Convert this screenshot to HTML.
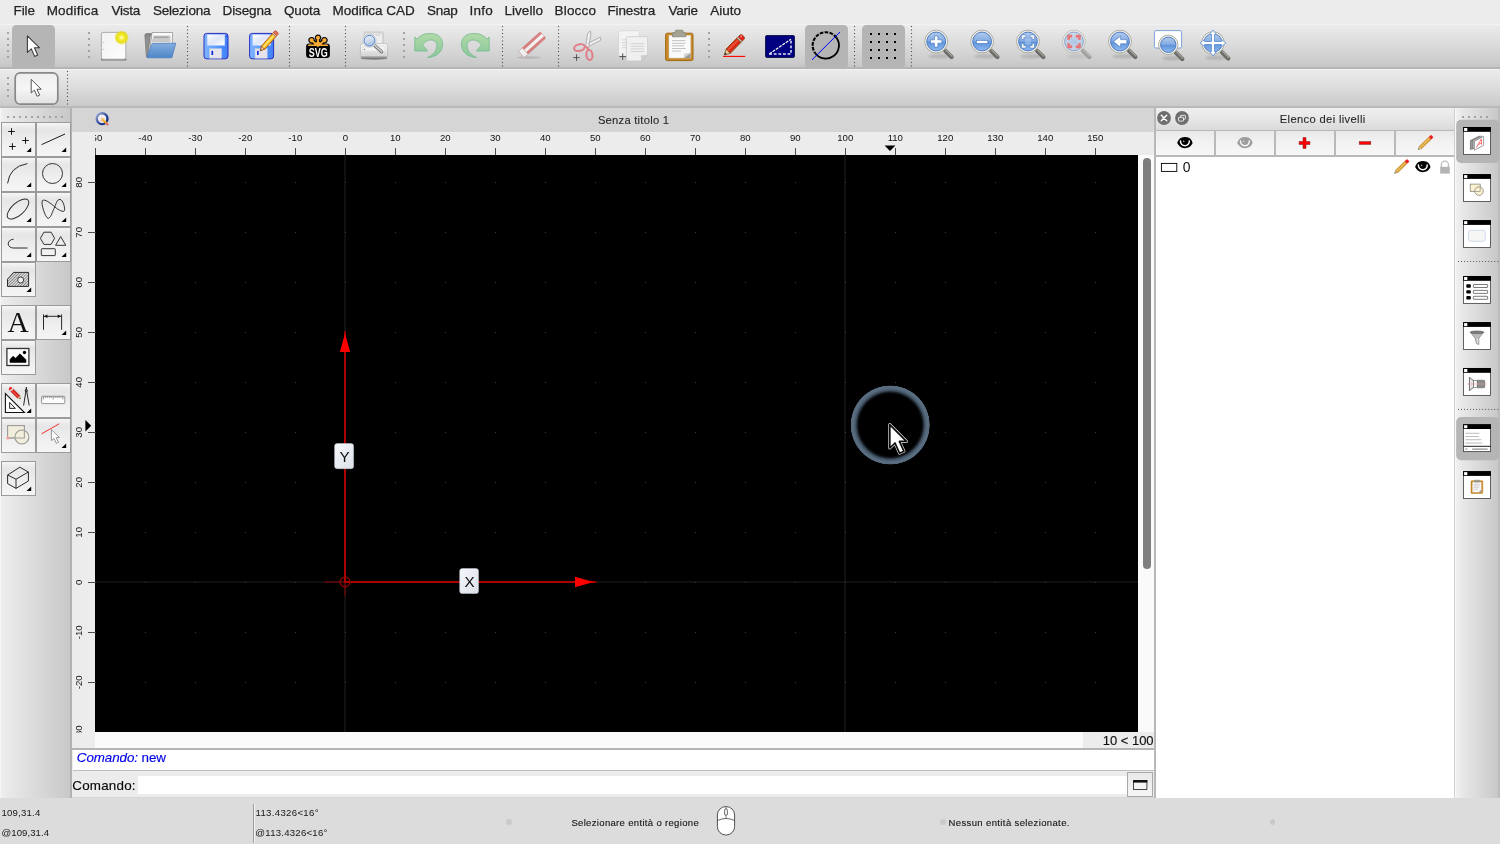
<!DOCTYPE html>
<html lang="it"><head><meta charset="utf-8"><title>QCAD - Senza titolo 1</title>
<style>

html,body{margin:0;padding:0;}
body{width:1500px;height:844px;overflow:hidden;background:#ececec;font-family:"Liberation Sans",sans-serif;color:#111;}
#app{will-change:transform;position:relative;width:1500px;height:844px;overflow:hidden;background:#ececec;}
.abs,#app div,#app span,#app svg{position:absolute;}
#app svg{overflow:visible;}
.menubar{left:0;top:0;width:1500px;height:24px;background:#ececec;}
.menubar span{top:0;height:22px;line-height:21px;font-size:14px;color:#1c1c1c;white-space:nowrap;transform-origin:0 50%;}
.tb1{left:0;top:24px;width:1500px;height:45px;background:linear-gradient(#f6f6f6 0px,#ebebeb 1.4px,#e4e4e4 10px,#d8d8d8 24px,#cccccc 38px,#c6c6c6 42.6px,#b4b4b4 43.6px,#b4b4b4 44.6px,#c8c8c8 45px);}
.tb2{left:0;top:69px;width:1500px;height:39px;background:linear-gradient(#f6f6f6 0px,#ebebeb 1.4px,#e5e5e5 9px,#dadada 21px,#cfcfcf 32px,#cbcbcb 36.6px,#b8b8b8 37.6px,#b8b8b8 38.6px,#c8c8c8 39px);}
.lefttb{left:0;top:108px;width:72px;height:690px;background:linear-gradient(90deg,#fbfbfb 0px,#eeeeee 1.5px,#e6e6e6 14px,#d9d9d9 38px,#cdcdcd 60px,#c9c9c9 69.5px,#b2b2b2 70.5px,#b2b2b2 72px);}
.tabbar{left:72px;top:108px;width:1082px;height:24px;background:#d5d5d5;}
.hruler{left:72px;top:132px;width:1082px;height:23px;background:#ececec;}
.vruler{left:72px;top:155px;width:23px;height:593px;background:#ececec;}
.canvas{left:95px;top:155px;width:1043px;height:577px;background:#000;overflow:hidden;}
.vscroll{left:1138px;top:155px;width:16px;height:577px;background:#fafafa;}
.hscroll{left:95px;top:732px;width:1059px;height:16px;background:#fafafa;}
.status{left:0;top:798px;width:1500px;height:46px;background:#dcdcdc;}
.rpanel{left:1156px;top:108px;width:298px;height:690px;background:#fff;}
.righttb{left:1454px;top:108px;width:46px;height:690px;background:linear-gradient(90deg,#d0d0d0 0px,#d0d0d0 1px,#f8f8f8 1.4px,#f0f0f0 2.6px,#e8e8e8 8px,#dadada 24px,#cccccc 40px,#c8c8c8 43.8px,#bcbcbc 44.4px,#bcbcbc 46px);}

.rl{top:-2px;width:60px;text-align:center;font-size:9.6px;line-height:16px;height:16px;color:#1a1a1a;letter-spacing:-0.1px;}
.vrl{left:-24px;width:60px;height:60px;}

.lbtn{height:35.8px;box-sizing:border-box;border:1.2px solid #9b9b9b;background:linear-gradient(#f6f6f6 0%,#ebebeb 12%,#e6e6e6 22%,#efefef 60%,#f5f5f5 100%);}
.lsep{width:1.5px;height:34px;background:#9b9b9b;}

</style></head>
<body>
<div id="app">
<div class="menubar"></div>
<div class="tb1"></div>
<div class="tb2"></div>
<div class="lefttb"></div>
<div class="tabbar"></div>
<div class="hruler"></div>
<div class="vruler"></div>
<div class="canvas"></div>
<div class="vscroll"></div>
<div class="hscroll"></div>
<div class="rpanel"></div>
<div class="righttb"></div>
<div class="status"></div>
<span id="t_menu0" style="left:13.50px;top:1.00px;font-size:13.5px;line-height:20px;height:20px;letter-spacing:-0.111px;color:#242424;font-style:normal;font-weight:normal;font-family:'Liberation Sans',sans-serif;white-space:pre;-webkit-text-stroke:0.25px #242424;">File</span><span id="t_menu1" style="left:46.70px;top:1.00px;font-size:13.5px;line-height:20px;height:20px;letter-spacing:0.186px;color:#242424;font-style:normal;font-weight:normal;font-family:'Liberation Sans',sans-serif;white-space:pre;-webkit-text-stroke:0.25px #242424;">Modifica</span><span id="t_menu2" style="left:111.47px;top:1.00px;font-size:13.5px;line-height:20px;height:20px;letter-spacing:-0.250px;color:#242424;font-style:normal;font-weight:normal;font-family:'Liberation Sans',sans-serif;white-space:pre;-webkit-text-stroke:0.25px #242424;">Vista</span><span id="t_menu3" style="left:153.00px;top:1.00px;font-size:13.5px;line-height:20px;height:20px;letter-spacing:-0.229px;color:#242424;font-style:normal;font-weight:normal;font-family:'Liberation Sans',sans-serif;white-space:pre;-webkit-text-stroke:0.25px #242424;">Seleziona</span><span id="t_menu4" style="left:222.50px;top:1.00px;font-size:13.5px;line-height:20px;height:20px;letter-spacing:-0.111px;color:#242424;font-style:normal;font-weight:normal;font-family:'Liberation Sans',sans-serif;white-space:pre;-webkit-text-stroke:0.25px #242424;">Disegna</span><span id="t_menu5" style="left:284.00px;top:1.00px;font-size:13.5px;line-height:20px;height:20px;letter-spacing:-0.150px;color:#242424;font-style:normal;font-weight:normal;font-family:'Liberation Sans',sans-serif;white-space:pre;-webkit-text-stroke:0.25px #242424;">Quota</span><span id="t_menu6" style="left:332.50px;top:1.00px;font-size:13.5px;line-height:20px;height:20px;letter-spacing:-0.024px;color:#242424;font-style:normal;font-weight:normal;font-family:'Liberation Sans',sans-serif;white-space:pre;-webkit-text-stroke:0.25px #242424;">Modifica CAD</span><span id="t_menu7" style="left:427.00px;top:1.00px;font-size:13.5px;line-height:20px;height:20px;letter-spacing:-0.256px;color:#242424;font-style:normal;font-weight:normal;font-family:'Liberation Sans',sans-serif;white-space:pre;-webkit-text-stroke:0.25px #242424;">Snap</span><span id="t_menu8" style="left:469.53px;top:1.00px;font-size:13.5px;line-height:20px;height:20px;letter-spacing:0.211px;color:#242424;font-style:normal;font-weight:normal;font-family:'Liberation Sans',sans-serif;white-space:pre;-webkit-text-stroke:0.25px #242424;">Info</span><span id="t_menu9" style="left:504.50px;top:1.00px;font-size:13.5px;line-height:20px;height:20px;letter-spacing:0.028px;color:#242424;font-style:normal;font-weight:normal;font-family:'Liberation Sans',sans-serif;white-space:pre;-webkit-text-stroke:0.25px #242424;">Livello</span><span id="t_menu10" style="left:554.50px;top:1.00px;font-size:13.5px;line-height:20px;height:20px;letter-spacing:0.200px;color:#242424;font-style:normal;font-weight:normal;font-family:'Liberation Sans',sans-serif;white-space:pre;-webkit-text-stroke:0.25px #242424;">Blocco</span><span id="t_menu11" style="left:607.50px;top:1.00px;font-size:13.5px;line-height:20px;height:20px;letter-spacing:-0.157px;color:#242424;font-style:normal;font-weight:normal;font-family:'Liberation Sans',sans-serif;white-space:pre;-webkit-text-stroke:0.25px #242424;">Finestra</span><span id="t_menu12" style="left:668.47px;top:1.00px;font-size:13.5px;line-height:20px;height:20px;letter-spacing:-0.225px;color:#242424;font-style:normal;font-weight:normal;font-family:'Liberation Sans',sans-serif;white-space:pre;-webkit-text-stroke:0.25px #242424;">Varie</span><span id="t_menu13" style="left:710.17px;top:1.00px;font-size:13.5px;line-height:20px;height:20px;letter-spacing:0.000px;color:#242424;font-style:normal;font-weight:normal;font-family:'Liberation Sans',sans-serif;white-space:pre;-webkit-text-stroke:0.25px #242424;">Aiuto</span>
<svg style="left:0;top:0" width="1500" height="110" viewBox="0 0 1500 110"><defs>
<linearGradient id="gLens" x1="0" y1="0" x2="0" y2="1"><stop offset="0" stop-color="#b4cbec"/><stop offset="0.46" stop-color="#84ace2"/><stop offset="0.54" stop-color="#6094da"/><stop offset="1" stop-color="#8fbaf0"/></linearGradient>
<linearGradient id="gLensR" x1="0" y1="0" x2="0" y2="1"><stop offset="0" stop-color="#c3d3ea"/><stop offset="0.5" stop-color="#a9c3e8"/><stop offset="1" stop-color="#b9d2f2"/></linearGradient>
<linearGradient id="gPaper" x1="0" y1="0" x2="1" y2="1"><stop offset="0" stop-color="#f2f2f2"/><stop offset="1" stop-color="#fdfdfd"/></linearGradient>
<linearGradient id="gFolder" x1="0" y1="0" x2="0" y2="1"><stop offset="0" stop-color="#86aede"/><stop offset="1" stop-color="#4e86c8"/></linearGradient>
<linearGradient id="gFloppy" x1="0" y1="0" x2="1" y2="0"><stop offset="0" stop-color="#7fb4ff"/><stop offset="0.5" stop-color="#5b9cff"/><stop offset="1" stop-color="#3f7ff5"/></linearGradient>
<linearGradient id="gLabel" x1="0" y1="0" x2="1" y2="1"><stop offset="0" stop-color="#ffffff"/><stop offset="0.5" stop-color="#dfe6fb"/><stop offset="1" stop-color="#ffffff"/></linearGradient>
<linearGradient id="gGreen" x1="0" y1="0" x2="0" y2="1"><stop offset="0" stop-color="#b2d9a8"/><stop offset="1" stop-color="#86c79a"/></linearGradient>
<linearGradient id="gBtn" x1="0" y1="0" x2="0" y2="1"><stop offset="0" stop-color="#ededed"/><stop offset="0.5" stop-color="#f6f6f6"/><stop offset="1" stop-color="#e2e2e2"/></linearGradient>
<radialGradient id="gGlow"><stop offset="0" stop-color="#ffffe8"/><stop offset="0.2" stop-color="#fbf56a"/><stop offset="0.45" stop-color="#f0e820"/><stop offset="0.72" stop-color="#e6dd18" stop-opacity="0.95"/><stop offset="1" stop-color="#e6dd18" stop-opacity="0"/></radialGradient>
<filter id="fBlur1" x="-50%" y="-50%" width="200%" height="200%"><feGaussianBlur stdDeviation="1.2"/></filter>
<filter id="fBlur05" x="-50%" y="-50%" width="200%" height="200%"><feGaussianBlur stdDeviation="0.5"/></filter>
</defs><rect x="12" y="25" width="43" height="43.5" rx="4.5" fill="#b5b5b5"/><rect x="805" y="25" width="43" height="43.5" rx="4.5" fill="#b5b5b5"/><rect x="862" y="25" width="43" height="43.5" rx="4.5" fill="#b5b5b5"/><rect x="7" y="32" width="2" height="2" fill="#a3a3a3"/><rect x="7" y="38" width="2" height="2" fill="#a3a3a3"/><rect x="7" y="44" width="2" height="2" fill="#a3a3a3"/><rect x="7" y="50" width="2" height="2" fill="#a3a3a3"/><rect x="7" y="56" width="2" height="2" fill="#a3a3a3"/><rect x="88" y="32" width="2" height="2" fill="#a3a3a3"/><rect x="88" y="38" width="2" height="2" fill="#a3a3a3"/><rect x="88" y="44" width="2" height="2" fill="#a3a3a3"/><rect x="88" y="50" width="2" height="2" fill="#a3a3a3"/><rect x="88" y="56" width="2" height="2" fill="#a3a3a3"/><rect x="403" y="32" width="2" height="2" fill="#a3a3a3"/><rect x="403" y="38" width="2" height="2" fill="#a3a3a3"/><rect x="403" y="44" width="2" height="2" fill="#a3a3a3"/><rect x="403" y="50" width="2" height="2" fill="#a3a3a3"/><rect x="403" y="56" width="2" height="2" fill="#a3a3a3"/><rect x="708" y="32" width="2" height="2" fill="#a3a3a3"/><rect x="708" y="38" width="2" height="2" fill="#a3a3a3"/><rect x="708" y="44" width="2" height="2" fill="#a3a3a3"/><rect x="708" y="50" width="2" height="2" fill="#a3a3a3"/><rect x="708" y="56" width="2" height="2" fill="#a3a3a3"/><rect x="186.95" y="25.95" width="1.1" height="1.1" fill="#505050"/><rect x="186.95" y="29.45" width="1.1" height="1.1" fill="#505050"/><rect x="186.95" y="32.95" width="1.1" height="1.1" fill="#505050"/><rect x="186.95" y="36.45" width="1.1" height="1.1" fill="#505050"/><rect x="186.95" y="40.45" width="1.1" height="1.1" fill="#505050"/><rect x="186.95" y="43.95" width="1.1" height="1.1" fill="#505050"/><rect x="186.95" y="47.45" width="1.1" height="1.1" fill="#505050"/><rect x="186.95" y="50.95" width="1.1" height="1.1" fill="#505050"/><rect x="186.95" y="54.95" width="1.1" height="1.1" fill="#505050"/><rect x="186.95" y="58.45" width="1.1" height="1.1" fill="#505050"/><rect x="186.95" y="61.95" width="1.1" height="1.1" fill="#505050"/><rect x="186.95" y="65.45" width="1.1" height="1.1" fill="#505050"/><rect x="288.95" y="25.95" width="1.1" height="1.1" fill="#505050"/><rect x="288.95" y="29.45" width="1.1" height="1.1" fill="#505050"/><rect x="288.95" y="32.95" width="1.1" height="1.1" fill="#505050"/><rect x="288.95" y="36.45" width="1.1" height="1.1" fill="#505050"/><rect x="288.95" y="40.45" width="1.1" height="1.1" fill="#505050"/><rect x="288.95" y="43.95" width="1.1" height="1.1" fill="#505050"/><rect x="288.95" y="47.45" width="1.1" height="1.1" fill="#505050"/><rect x="288.95" y="50.95" width="1.1" height="1.1" fill="#505050"/><rect x="288.95" y="54.95" width="1.1" height="1.1" fill="#505050"/><rect x="288.95" y="58.45" width="1.1" height="1.1" fill="#505050"/><rect x="288.95" y="61.95" width="1.1" height="1.1" fill="#505050"/><rect x="288.95" y="65.45" width="1.1" height="1.1" fill="#505050"/><rect x="344.95" y="25.95" width="1.1" height="1.1" fill="#505050"/><rect x="344.95" y="29.45" width="1.1" height="1.1" fill="#505050"/><rect x="344.95" y="32.95" width="1.1" height="1.1" fill="#505050"/><rect x="344.95" y="36.45" width="1.1" height="1.1" fill="#505050"/><rect x="344.95" y="40.45" width="1.1" height="1.1" fill="#505050"/><rect x="344.95" y="43.95" width="1.1" height="1.1" fill="#505050"/><rect x="344.95" y="47.45" width="1.1" height="1.1" fill="#505050"/><rect x="344.95" y="50.95" width="1.1" height="1.1" fill="#505050"/><rect x="344.95" y="54.95" width="1.1" height="1.1" fill="#505050"/><rect x="344.95" y="58.45" width="1.1" height="1.1" fill="#505050"/><rect x="344.95" y="61.95" width="1.1" height="1.1" fill="#505050"/><rect x="344.95" y="65.45" width="1.1" height="1.1" fill="#505050"/><rect x="501.95" y="25.95" width="1.1" height="1.1" fill="#505050"/><rect x="501.95" y="29.45" width="1.1" height="1.1" fill="#505050"/><rect x="501.95" y="32.95" width="1.1" height="1.1" fill="#505050"/><rect x="501.95" y="36.45" width="1.1" height="1.1" fill="#505050"/><rect x="501.95" y="40.45" width="1.1" height="1.1" fill="#505050"/><rect x="501.95" y="43.95" width="1.1" height="1.1" fill="#505050"/><rect x="501.95" y="47.45" width="1.1" height="1.1" fill="#505050"/><rect x="501.95" y="50.95" width="1.1" height="1.1" fill="#505050"/><rect x="501.95" y="54.95" width="1.1" height="1.1" fill="#505050"/><rect x="501.95" y="58.45" width="1.1" height="1.1" fill="#505050"/><rect x="501.95" y="61.95" width="1.1" height="1.1" fill="#505050"/><rect x="501.95" y="65.45" width="1.1" height="1.1" fill="#505050"/><rect x="557.95" y="25.95" width="1.1" height="1.1" fill="#505050"/><rect x="557.95" y="29.45" width="1.1" height="1.1" fill="#505050"/><rect x="557.95" y="32.95" width="1.1" height="1.1" fill="#505050"/><rect x="557.95" y="36.45" width="1.1" height="1.1" fill="#505050"/><rect x="557.95" y="40.45" width="1.1" height="1.1" fill="#505050"/><rect x="557.95" y="43.95" width="1.1" height="1.1" fill="#505050"/><rect x="557.95" y="47.45" width="1.1" height="1.1" fill="#505050"/><rect x="557.95" y="50.95" width="1.1" height="1.1" fill="#505050"/><rect x="557.95" y="54.95" width="1.1" height="1.1" fill="#505050"/><rect x="557.95" y="58.45" width="1.1" height="1.1" fill="#505050"/><rect x="557.95" y="61.95" width="1.1" height="1.1" fill="#505050"/><rect x="557.95" y="65.45" width="1.1" height="1.1" fill="#505050"/><rect x="853.95" y="25.95" width="1.1" height="1.1" fill="#505050"/><rect x="853.95" y="29.45" width="1.1" height="1.1" fill="#505050"/><rect x="853.95" y="32.95" width="1.1" height="1.1" fill="#505050"/><rect x="853.95" y="36.45" width="1.1" height="1.1" fill="#505050"/><rect x="853.95" y="40.45" width="1.1" height="1.1" fill="#505050"/><rect x="853.95" y="43.95" width="1.1" height="1.1" fill="#505050"/><rect x="853.95" y="47.45" width="1.1" height="1.1" fill="#505050"/><rect x="853.95" y="50.95" width="1.1" height="1.1" fill="#505050"/><rect x="853.95" y="54.95" width="1.1" height="1.1" fill="#505050"/><rect x="853.95" y="58.45" width="1.1" height="1.1" fill="#505050"/><rect x="853.95" y="61.95" width="1.1" height="1.1" fill="#505050"/><rect x="853.95" y="65.45" width="1.1" height="1.1" fill="#505050"/><rect x="910.95" y="25.95" width="1.1" height="1.1" fill="#505050"/><rect x="910.95" y="29.45" width="1.1" height="1.1" fill="#505050"/><rect x="910.95" y="32.95" width="1.1" height="1.1" fill="#505050"/><rect x="910.95" y="36.45" width="1.1" height="1.1" fill="#505050"/><rect x="910.95" y="40.45" width="1.1" height="1.1" fill="#505050"/><rect x="910.95" y="43.95" width="1.1" height="1.1" fill="#505050"/><rect x="910.95" y="47.45" width="1.1" height="1.1" fill="#505050"/><rect x="910.95" y="50.95" width="1.1" height="1.1" fill="#505050"/><rect x="910.95" y="54.95" width="1.1" height="1.1" fill="#505050"/><rect x="910.95" y="58.45" width="1.1" height="1.1" fill="#505050"/><rect x="910.95" y="61.95" width="1.1" height="1.1" fill="#505050"/><rect x="910.95" y="65.45" width="1.1" height="1.1" fill="#505050"/><path d="M27.40 35.80 L27.40 52.40 L31.30 48.90 L34.60 56.40 L37.70 55.00 L34.40 47.80 L39.60 47.80 Z" fill="#fff" stroke="#3c3c3c" stroke-width="1.1" stroke-linejoin="round"/><rect x="101" y="58.2" width="25.4" height="2.4" rx="1.2" fill="#000" opacity="0.42" filter="url(#fBlur05)"/><rect x="101.4" y="32.4" width="24.4" height="26.8" rx="1.6" fill="url(#gPaper)" stroke="#a6a6a6" stroke-width="0.9"/><rect x="102.8" y="42" width="1.2" height="0.8" fill="#bbb"/><rect x="102.8" y="49" width="1.2" height="0.8" fill="#bbb"/><circle cx="121.6" cy="37.6" r="7.4" fill="url(#gGlow)"/><path d="M144.6 35.5 L152 35.5 L152 33 L146 33 Z" fill="#8c8c8c"/><path d="M144.8 34.8 L150.5 34.8 L147.5 57.4 L146.4 57 Z" fill="#8f8f8f" stroke="#6e6e6e" stroke-width="0.6"/><path d="M152 32.5 L172.6 32.5 L172.2 45 L149.4 54 Z" fill="#fafafa" stroke="#8a8a8a" stroke-width="0.7"/><path d="M153.5 35.5 L170.5 35.5 L170.5 42.5 L151.5 42.5 Z" fill="#c9c9c9"/><rect x="154" y="36.6" width="14.5" height="1.2" fill="#9c9c9c"/><path d="M152.2 43.5 L175.8 43.2 L172 57.2 Q171.8 57.8 171 57.8 L147.6 57.8 Q146.8 57.6 147 56.8 Z" fill="url(#gFolder)" stroke="#4a7dbd" stroke-width="0.8" stroke-linejoin="round"/><rect x="204" y="33.4" width="24" height="25.4" rx="2.6" fill="url(#gFloppy)" stroke="#2a2fc0" stroke-width="1"/><rect x="207.2" y="34.7" width="17.6" height="10.6" fill="url(#gLabel)" stroke="#c8d6ff" stroke-width="0.5"/><rect x="209.4" y="48.6" width="12.2" height="9.6" fill="#e4e4ea" stroke="#b8c8ee" stroke-width="0.5"/><rect x="211.4" y="50.8" width="1.8" height="4.2" rx="0.6" fill="#1730d8"/><rect x="225.6" y="35.8" width="1" height="1.2" fill="#2a44d0"/><rect x="249.6" y="33.4" width="24" height="25.4" rx="2.6" fill="url(#gFloppy)" stroke="#2a2fc0" stroke-width="1"/><rect x="252.8" y="34.7" width="17.6" height="10.6" fill="url(#gLabel)" stroke="#c8d6ff" stroke-width="0.5"/><rect x="255" y="48.6" width="12.2" height="9.6" fill="#e4e4ea" stroke="#b8c8ee" stroke-width="0.5"/><rect x="257" y="50.8" width="1.8" height="4.2" rx="0.6" fill="#1730d8"/><rect x="271.2" y="35.8" width="1" height="1.2" fill="#2a44d0"/><g transform="translate(260.3 50.8) rotate(-48.5)"><path d="M0 0 L4.2 -2.3 L4.2 2.3 Z" fill="#f0cfa0" stroke="#a04010" stroke-width="0.7"/><path d="M0 0 L1.6 -0.9 L1.6 0.9 Z" fill="#40302a"/><rect x="4.2" y="-2.3" width="16.6" height="4.6" fill="#f5c21a" stroke="#b04a10" stroke-width="0.8"/><rect x="4.2" y="-0.8" width="16.6" height="1.5" fill="#ffe27a"/><rect x="20.8" y="-2.3" width="1.6" height="4.6" fill="#d8d8d8" stroke="#b04a10" stroke-width="0.6"/><path d="M22.4 -2.3 h1.6 q1.2 0 1.2 1.2 v2.2 q0 1.2 -1.2 1.2 h-1.6 Z" fill="#e9735a" stroke="#b03a20" stroke-width="0.7"/></g><g fill="#000" stroke="#000" stroke-width="2.8" stroke-linejoin="round"><g transform="translate(318 46) rotate(-48)"><path d="M-0.9 0 L-0.9 -7 A1.9 1.9 0 1 1 0.9 -7 L0.9 0 Z"/></g><g transform="translate(318 46) rotate(0)"><path d="M-0.9 0 L-0.9 -6.6 A1.9 1.9 0 1 1 0.9 -6.6 L0.9 0 Z"/></g><g transform="translate(318 46) rotate(48)"><path d="M-0.9 0 L-0.9 -7 A1.9 1.9 0 1 1 0.9 -7 L0.9 0 Z"/></g></g><rect x="306.1" y="43.4" width="23.8" height="14.5" rx="3.2" fill="#000"/><g fill="#f9ab35" stroke="#f9ab35" stroke-width="0.3" stroke-linejoin="round"><g transform="translate(318 46) rotate(-48)"><path d="M-0.9 0 L-0.9 -7 A1.9 1.9 0 1 1 0.9 -7 L0.9 0 Z"/></g><g transform="translate(318 46) rotate(0)"><path d="M-0.9 0 L-0.9 -6.6 A1.9 1.9 0 1 1 0.9 -6.6 L0.9 0 Z"/></g><g transform="translate(318 46) rotate(48)"><path d="M-0.9 0 L-0.9 -7 A1.9 1.9 0 1 1 0.9 -7 L0.9 0 Z"/></g></g><path d="M307.6 45.6 Q308.6 44 311 44.4 L325 44.4 Q327.4 44 328.4 45.6 Q327.6 46.2 325 46.1 L311 46.1 Q308.4 46.2 307.6 45.6 Z" fill="#f9ab35"/><path d="M313.6 44.6 L318 41 L322.4 44.6 Z" fill="#f9ab35"/><text x="308.7" y="57" font-family="Liberation Sans, sans-serif" font-weight="bold" font-size="13.6" fill="#fff" textLength="18.9" lengthAdjust="spacingAndGlyphs">SVG</text><defs><linearGradient id="gPrn" x1="0" y1="0" x2="0" y2="1"><stop offset="0" stop-color="#fbfbfb"/><stop offset="0.55" stop-color="#ececec"/><stop offset="0.6" stop-color="#dedede"/><stop offset="1" stop-color="#d2d2d2"/></linearGradient><linearGradient id="gLensL" x1="0" y1="0" x2="0.3" y2="1"><stop offset="0" stop-color="#e4edf8"/><stop offset="0.55" stop-color="#cfdcee"/><stop offset="1" stop-color="#a9c0e0"/></linearGradient></defs><ellipse cx="374" cy="58.2" rx="13.4" ry="1.5" fill="#000" opacity="0.4" filter="url(#fBlur05)"/><rect x="364.2" y="32" width="19" height="13.4" rx="1" fill="#dcdcdc" stroke="#bdbdbd" stroke-width="0.7"/><rect x="374.6" y="34" width="7.4" height="9.4" fill="#ededed"/><rect x="376" y="34.6" width="4.4" height="1" fill="#cfcfcf"/><path d="M363 43.6 L385 43.6 Q387.6 43.6 387.6 46.4 L387.6 55.6 Q387.6 57.4 385.8 57.4 L362.2 57.4 Q360.4 57.4 360.4 55.6 L360.4 46.4 Q360.4 43.6 363 43.6 Z" fill="url(#gPrn)" stroke="#b2b2b2" stroke-width="0.7"/><path d="M362.8 46 L385.2 46 L385.2 49.6 Q385.2 51.2 383.6 51.2 L364.4 51.2 Q362.8 51.2 362.8 49.6 Z" fill="#f4f4f4" stroke="#cfcfcf" stroke-width="0.5"/><circle cx="364.6" cy="49.4" r="0.6" fill="#777"/><rect x="361" y="56.6" width="26" height="1.2" rx="0.6" fill="#8e8e8e"/><line x1="374.6" y1="45.6" x2="381.6" y2="51.8" stroke="#777" stroke-width="3.4" stroke-linecap="round"/><line x1="374.8" y1="45.4" x2="381.8" y2="51.6" stroke="#cfcfcf" stroke-width="1.5" stroke-linecap="round"/><circle cx="369.5" cy="40.7" r="6.7" fill="#efefec" stroke="#c4c4bc" stroke-width="0.6"/><circle cx="369.5" cy="40.7" r="5.4" fill="url(#gLensL)" stroke="#4f84d2" stroke-width="1"/><g transform="translate(414.4 33.6)"><path d="M0.4 12.6 L0.4 3.4 L2.6 5.6 C6.6 0.2 14.4 -1.4 21.6 0.8 C27.2 3 29.4 9.4 27.6 14.6 C26 19.6 20.6 23.8 12.8 24 C17.4 22.2 21 19 22.2 14.6 C23.4 9.6 20.6 6.4 16.6 6.4 C13.4 6.4 10.6 8 8.2 11.2 L13 17.4 L0.4 17.4 Z" fill="url(#gGreen)" stroke="#7cbd94" stroke-width="0.9" stroke-linejoin="round"/></g><g transform="translate(489.6 33.6) scale(-1 1)"><path d="M0.4 12.6 L0.4 3.4 L2.6 5.6 C6.6 0.2 14.4 -1.4 21.6 0.8 C27.2 3 29.4 9.4 27.6 14.6 C26 19.6 20.6 23.8 12.8 24 C17.4 22.2 21 19 22.2 14.6 C23.4 9.6 20.6 6.4 16.6 6.4 C13.4 6.4 10.6 8 8.2 11.2 L13 17.4 L0.4 17.4 Z" fill="url(#gGreen)" stroke="#7cbd94" stroke-width="0.9" stroke-linejoin="round"/></g><g opacity="0.62"><ellipse cx="529" cy="57.6" rx="12" ry="1.4" fill="#000" opacity="0.18" filter="url(#fBlur05)"/><g transform="translate(521.4 54.4) rotate(-42)"><rect x="0" y="-4.2" width="29" height="8.4" rx="1" fill="#d84a4a" stroke="#c03838" stroke-width="0.6"/><rect x="0" y="-1.6" width="29" height="3.2" fill="#fff"/><rect x="0" y="-4.2" width="5" height="8.4" fill="#fff" stroke="#b8a0a0" stroke-width="0.6"/></g></g><g opacity="0.85"><path d="M587.6 33.4 L590.4 31 L590.8 34 L588.6 48.4 L585.8 45.6 Z" fill="#f4f4f4" stroke="#8a8a8a" stroke-width="0.7" stroke-linejoin="round"/><path d="M600.4 37.2 L600.8 40.2 L590.2 45.6 L588.4 43.2 Z" fill="#f4f4f4" stroke="#8a8a8a" stroke-width="0.7" stroke-linejoin="round"/><g fill="none" stroke="#e2727e" stroke-width="2.1"><ellipse cx="579.4" cy="47.6" rx="5.4" ry="3.3" transform="rotate(-14 579.4 47.6)"/><ellipse cx="589.4" cy="55" rx="3" ry="5" transform="rotate(-8 589.4 55)"/><path d="M584.2 46.4 Q587 46.6 588.6 50.2" /></g><path d="M573.2 57.6 h6.6 M576.5 54.3 v6.6" stroke="#333" stroke-width="0.9" fill="none"/></g><g opacity="0.9"><rect x="618.6" y="30.8" width="20.6" height="25.4" rx="1.4" fill="#f6f6f6" stroke="#d2d2d2" stroke-width="0.7"/><rect x="622" y="39.4" width="6" height="1" fill="#d6d6d6"/><rect x="622" y="42" width="6" height="1" fill="#d6d6d6"/><rect x="622" y="44.6" width="6" height="1" fill="#d6d6d6"/><rect x="622" y="47.2" width="6" height="1" fill="#d6d6d6"/><path d="M627.6 36.6 L646.4 36.6 Q647.6 36.6 647.6 37.8 L647.6 55.4 L641.8 61 L627.6 61 Q626.4 61 626.4 59.8 L626.4 37.8 Q626.4 36.6 627.6 36.6 Z" fill="#f3f3f3" stroke="#c4c4c4" stroke-width="0.7"/><path d="M641.8 61 L641.4 55.8 L647.6 55.4 Z" fill="#cfcfcf" stroke="#b8b8b8" stroke-width="0.5"/><rect x="630.6" y="43.2" width="13.6" height="1" fill="#d2d2d2"/><rect x="630.6" y="45.8" width="13.6" height="1" fill="#d2d2d2"/><rect x="630.6" y="48.4" width="13.6" height="1" fill="#d2d2d2"/><rect x="630.6" y="51" width="13.6" height="1" fill="#d2d2d2"/><path d="M619.4 56.6 h6.6 M622.7 53.3 v6.6" stroke="#333" stroke-width="0.9" fill="none"/></g><rect x="665.6" y="33.2" width="27.4" height="27.4" rx="1.6" fill="#c8892a" stroke="#a06a14" stroke-width="1"/><path d="M669 35.4 L690.6 35.4 L690.6 58 L669 58 Z" fill="#fafafa" stroke="#d6d6d6" stroke-width="0.5"/><path d="M683.6 58 L690.6 58 L690.6 53 Z" fill="#9a9a9a"/><path d="M683.6 58 L684.6 53.6 L690.6 53 Z" fill="#d0d0d0"/><rect x="672" y="40.2" width="13.4" height="0.9" fill="#bdbdbd"/><rect x="672" y="42.8" width="13.4" height="0.9" fill="#bdbdbd"/><rect x="672" y="45.4" width="12" height="0.9" fill="#bdbdbd"/><rect x="672" y="48" width="13.8" height="0.9" fill="#bdbdbd"/><rect x="672" y="50.6" width="9" height="0.9" fill="#bdbdbd"/><path d="M672.4 36.8 L672.4 33.8 Q672.4 32.4 674 32.4 L675.4 32.4 L675.4 30.8 Q675.4 30.2 676 30.2 L682.4 30.2 Q683 30.2 683 30.8 L683 32.4 L684.2 32.4 Q685.8 32.4 685.8 33.8 L685.8 36.8 Z" fill="#a3a396" stroke="#7c7c70" stroke-width="0.7"/><line x1="723" y1="56.4" x2="745.2" y2="56.4" stroke="#f00" stroke-width="1.1"/><g transform="translate(724.4 55) rotate(-45.5)"><path d="M0 0 L5.4 -3 L5.4 3 Z" fill="#e8c9a0" stroke="#7a4a18" stroke-width="0.7" stroke-linejoin="round"/><path d="M0 0 L2.2 -1.2 L2.2 1.2 Z" fill="#222"/><rect x="5.4" y="-3" width="15.4" height="6" fill="#d82a14" stroke="#7a4a18" stroke-width="0.8"/><rect x="5.4" y="-1.6" width="15.4" height="1.6" fill="#f0503a"/><rect x="20.8" y="-3" width="1.8" height="6" fill="#c8c8c8" stroke="#7a4a18" stroke-width="0.5"/><path d="M22.6 -3 h2.2 q2 0 2 2 v2 q0 2 -2 2 h-2.2 Z" fill="#ee1c1c" stroke="#7a4a18" stroke-width="0.7"/><circle cx="25" cy="-1" r="0.9" fill="#ff9a90"/></g><rect x="765.6" y="35.6" width="28.8" height="21.8" rx="1" fill="#000080" stroke="#10104a" stroke-width="1"/><path d="M769.2 54 L791 39.2" stroke="#fff" stroke-width="1.2" stroke-dasharray="3 1" fill="none"/><path d="M769.2 54 L791 54 L791 39.2" stroke="#e4e4fa" stroke-width="1.5" stroke-dasharray="2.8 1.8" fill="none"/><path d="M815.2 53.2 A12.6 12.6 0 0 0 836.4 37.6" fill="none" stroke="#000" stroke-width="1.8"/><path d="M836.4 37.6 A12.6 12.6 0 0 0 815.2 53.2" fill="none" stroke="#000" stroke-width="2.1" stroke-dasharray="3.6 1.3"/><line x1="812" y1="59.8" x2="840" y2="32" stroke="#0000ff" stroke-width="1"/><rect x="870" y="33" width="2" height="2" fill="#000"/><rect x="870" y="41" width="2" height="2" fill="#000"/><rect x="870" y="49" width="2" height="2" fill="#000"/><rect x="870" y="57" width="2" height="2" fill="#000"/><rect x="878" y="33" width="2" height="2" fill="#000"/><rect x="878" y="41" width="2" height="2" fill="#000"/><rect x="878" y="49" width="2" height="2" fill="#000"/><rect x="878" y="57" width="2" height="2" fill="#000"/><rect x="886" y="33" width="2" height="2" fill="#000"/><rect x="886" y="41" width="2" height="2" fill="#000"/><rect x="886" y="49" width="2" height="2" fill="#000"/><rect x="886" y="57" width="2" height="2" fill="#000"/><rect x="894" y="33" width="2" height="2" fill="#000"/><rect x="894" y="41" width="2" height="2" fill="#000"/><rect x="894" y="49" width="2" height="2" fill="#000"/><rect x="894" y="57" width="2" height="2" fill="#000"/><g><ellipse cx="940.2" cy="56.248" rx="12" ry="2.2" fill="#000" opacity="0.13" filter="url(#fBlur1)"/><line x1="945.248" y1="50.748" x2="951.548" y2="57.048" stroke="#6c6c68" stroke-width="4.3" stroke-linecap="round"/><line x1="945.948" y1="50.048" x2="952.048" y2="56.148" stroke="#a4a49c" stroke-width="1.3" stroke-linecap="round"/></g><g><circle cx="936.2" cy="41.5" r="11.4" fill="#e6e6e0" stroke="#a2a29a" stroke-width="0.9"/><circle cx="936.2" cy="41.5" r="10.4" fill="none" stroke="#f6f6f2" stroke-width="0.7"/><circle cx="936.2" cy="41.5" r="9.4" fill="url(#gLens)" stroke="#4675c0" stroke-width="0.9"/></g><path d="M930.6 39.8 h3.9 v-3.9 h3.4 v3.9 h3.9 v3.4 h-3.9 v3.9 h-3.4 v-3.9 h-3.9 Z" fill="#fff" stroke="#3f72be" stroke-width="0.6"/><g><ellipse cx="986.1" cy="56.248" rx="12" ry="2.2" fill="#000" opacity="0.13" filter="url(#fBlur1)"/><line x1="991.148" y1="50.748" x2="997.448" y2="57.048" stroke="#6c6c68" stroke-width="4.3" stroke-linecap="round"/><line x1="991.848" y1="50.048" x2="997.948" y2="56.148" stroke="#a4a49c" stroke-width="1.3" stroke-linecap="round"/></g><g><circle cx="982.1" cy="41.5" r="11.4" fill="#e6e6e0" stroke="#a2a29a" stroke-width="0.9"/><circle cx="982.1" cy="41.5" r="10.4" fill="none" stroke="#f6f6f2" stroke-width="0.7"/><circle cx="982.1" cy="41.5" r="9.4" fill="url(#gLens)" stroke="#4675c0" stroke-width="0.9"/></g><rect x="976.4" y="40.3" width="11.4" height="3.1" fill="#fff" stroke="#3f72be" stroke-width="0.6"/><g><ellipse cx="1032" cy="56.248" rx="12" ry="2.2" fill="#000" opacity="0.13" filter="url(#fBlur1)"/><line x1="1037.05" y1="50.748" x2="1043.35" y2="57.048" stroke="#6c6c68" stroke-width="4.3" stroke-linecap="round"/><line x1="1037.75" y1="50.048" x2="1043.85" y2="56.148" stroke="#a4a49c" stroke-width="1.3" stroke-linecap="round"/></g><g><circle cx="1028" cy="41.5" r="11.4" fill="#e6e6e0" stroke="#a2a29a" stroke-width="0.9"/><circle cx="1028" cy="41.5" r="10.4" fill="none" stroke="#f6f6f2" stroke-width="0.7"/><circle cx="1028" cy="41.5" r="9.4" fill="url(#gLens)" stroke="#4675c0" stroke-width="0.9"/></g><rect x="1025" y="38.5" width="6" height="6" fill="#a8c4ec" opacity="0.6"/><path d="M1021.5 35 L1026 35 L1026 37.3 L1023.8 37.3 L1023.8 39.5 L1021.5 39.5 Z M1021.5 48 L1026 48 L1026 45.7 L1023.8 45.7 L1023.8 43.5 L1021.5 43.5 Z M1034.5 35 L1030 35 L1030 37.3 L1032.2 37.3 L1032.2 39.5 L1034.5 39.5 Z M1034.5 48 L1030 48 L1030 45.7 L1032.2 45.7 L1032.2 43.5 L1034.5 43.5 Z " fill="#fff" stroke="#3a6cb8" stroke-width="0.5"/><g opacity="0.5"><ellipse cx="1078" cy="56.248" rx="12" ry="2.2" fill="#000" opacity="0.13" filter="url(#fBlur1)"/><line x1="1083.05" y1="50.748" x2="1089.35" y2="57.048" stroke="#6c6c68" stroke-width="4.3" stroke-linecap="round"/><line x1="1083.75" y1="50.048" x2="1089.85" y2="56.148" stroke="#a4a49c" stroke-width="1.3" stroke-linecap="round"/></g><g opacity="0.6"><circle cx="1074" cy="41.5" r="11.4" fill="#e6e6e0" stroke="#a2a29a" stroke-width="0.9"/><circle cx="1074" cy="41.5" r="10.4" fill="none" stroke="#f6f6f2" stroke-width="0.7"/><circle cx="1074" cy="41.5" r="9.4" fill="url(#gLensR)" stroke="#4675c0" stroke-width="0.9"/></g><g opacity="0.85"><rect x="1071" y="38.5" width="6" height="6" fill="#a8c4ec" opacity="0.6"/><path d="M1067.5 35 L1072 35 L1072 37.3 L1069.8 37.3 L1069.8 39.5 L1067.5 39.5 Z M1067.5 48 L1072 48 L1072 45.7 L1069.8 45.7 L1069.8 43.5 L1067.5 43.5 Z M1080.5 35 L1076 35 L1076 37.3 L1078.2 37.3 L1078.2 39.5 L1080.5 39.5 Z M1080.5 48 L1076 48 L1076 45.7 L1078.2 45.7 L1078.2 43.5 L1080.5 43.5 Z " fill="#ee6464" stroke="#ee6464" stroke-width="0.5"/></g><g><ellipse cx="1124" cy="56.248" rx="12" ry="2.2" fill="#000" opacity="0.13" filter="url(#fBlur1)"/><line x1="1129.05" y1="50.748" x2="1135.35" y2="57.048" stroke="#6c6c68" stroke-width="4.3" stroke-linecap="round"/><line x1="1129.75" y1="50.048" x2="1135.85" y2="56.148" stroke="#a4a49c" stroke-width="1.3" stroke-linecap="round"/></g><g><circle cx="1120" cy="41.5" r="11.4" fill="#e6e6e0" stroke="#a2a29a" stroke-width="0.9"/><circle cx="1120" cy="41.5" r="10.4" fill="none" stroke="#f6f6f2" stroke-width="0.7"/><circle cx="1120" cy="41.5" r="9.4" fill="url(#gLens)" stroke="#4675c0" stroke-width="0.9"/></g><path d="M1113.4 41.7 L1120.6 36.2 L1120.6 39.6 L1126.8 39.6 L1126.8 43.8 L1120.6 43.8 L1120.6 47.2 Z" fill="#fff" stroke="#3f72be" stroke-width="0.6" stroke-linejoin="round"/><rect x="1154.4" y="30.6" width="27.2" height="17.4" rx="1.4" fill="#fff" stroke="#6f9ad6" stroke-width="0.9"/><g><ellipse cx="1172.3" cy="58.222" rx="10.3" ry="2.2" fill="#000" opacity="0.13" filter="url(#fBlur1)"/><line x1="1176.02" y1="52.722" x2="1182.32" y2="59.022" stroke="#6c6c68" stroke-width="4.3" stroke-linecap="round"/><line x1="1176.72" y1="52.022" x2="1182.82" y2="58.122" stroke="#a4a49c" stroke-width="1.3" stroke-linecap="round"/></g><g><circle cx="1168.3" cy="44.8" r="9.7" fill="#e6e6e0" stroke="#a2a29a" stroke-width="0.9"/><circle cx="1168.3" cy="44.8" r="8.7" fill="none" stroke="#f6f6f2" stroke-width="0.7"/><circle cx="1168.3" cy="44.8" r="7.7" fill="url(#gLens)" stroke="#4675c0" stroke-width="0.9"/></g><g><ellipse cx="1217" cy="57.67" rx="11.9" ry="2.2" fill="#000" opacity="0.13" filter="url(#fBlur1)"/><line x1="1221.97" y1="52.17" x2="1228.27" y2="58.47" stroke="#6c6c68" stroke-width="4.3" stroke-linecap="round"/><line x1="1222.67" y1="51.47" x2="1228.77" y2="57.57" stroke="#a4a49c" stroke-width="1.3" stroke-linecap="round"/></g><g><circle cx="1213" cy="43" r="11.3" fill="#e6e6e0" stroke="#a2a29a" stroke-width="0.9"/><circle cx="1213" cy="43" r="10.3" fill="none" stroke="#f6f6f2" stroke-width="0.7"/><circle cx="1213" cy="43" r="9.3" fill="url(#gLens)" stroke="#4675c0" stroke-width="0.9"/></g><path d="M1213.00 30.00 L1216.40 34.60 L1214.50 34.60 L1214.50 41.50 L1221.40 41.50 L1221.40 39.60 L1226.00 43.00 L1221.40 46.40 L1221.40 44.50 L1214.50 44.50 L1214.50 51.40 L1216.40 51.40 L1213.00 56.00 L1209.60 51.40 L1211.50 51.40 L1211.50 44.50 L1204.60 44.50 L1204.60 46.40 L1200.00 43.00 L1204.60 39.60 L1204.60 41.50 L1211.50 41.50 L1211.50 34.60 L1209.60 34.60 Z" fill="#fff" stroke="#4a80cc" stroke-width="0.7" stroke-linejoin="round"/><rect x="7" y="77" width="2" height="2" fill="#a3a3a3"/><rect x="7" y="83" width="2" height="2" fill="#a3a3a3"/><rect x="7" y="89" width="2" height="2" fill="#a3a3a3"/><rect x="7" y="95" width="2" height="2" fill="#a3a3a3"/><rect x="66.95" y="70.95" width="1.1" height="1.1" fill="#505050"/><rect x="66.95" y="74.45" width="1.1" height="1.1" fill="#505050"/><rect x="66.95" y="77.95" width="1.1" height="1.1" fill="#505050"/><rect x="66.95" y="81.45" width="1.1" height="1.1" fill="#505050"/><rect x="66.95" y="85.45" width="1.1" height="1.1" fill="#505050"/><rect x="66.95" y="88.95" width="1.1" height="1.1" fill="#505050"/><rect x="66.95" y="92.45" width="1.1" height="1.1" fill="#505050"/><rect x="66.95" y="95.95" width="1.1" height="1.1" fill="#505050"/><rect x="66.95" y="99.95" width="1.1" height="1.1" fill="#505050"/><rect x="66.95" y="103.45" width="1.1" height="1.1" fill="#505050"/><rect x="15.2" y="72.8" width="42.6" height="31.4" rx="5" fill="url(#gBtn)" stroke="#888" stroke-width="1.7"/><path d="M31.20 79.40 L31.20 93.01 L34.40 90.14 L37.10 96.29 L39.65 95.14 L36.94 89.24 L41.20 89.24 Z" fill="#fff" stroke="#444" stroke-width="0.9" stroke-linejoin="round"/></svg>
<span id="t_tabtitle" style="left:597.90px;top:110.00px;font-size:11.2px;line-height:20px;height:20px;letter-spacing:0.251px;color:#262626;font-style:normal;font-weight:normal;font-family:'Liberation Sans',sans-serif;white-space:pre;-webkit-text-stroke:0.1px #262626;">Senza titolo 1</span><svg style="left:0;top:0" width="120" height="132" viewBox="0 0 120 132"><defs><linearGradient id="gQ" x1="0" y1="0" x2="1" y2="1"><stop offset="0" stop-color="#a9b6d8"/><stop offset="0.4" stop-color="#4a62a8"/><stop offset="0.7" stop-color="#1f3a8c"/><stop offset="1" stop-color="#1a3486"/></linearGradient></defs><circle cx="102.1" cy="118.7" r="5.4" fill="#f6f6f8" stroke="url(#gQ)" stroke-width="2.4"/><path d="M98.6 118.7 h7 M102.1 115.4 v6.6" stroke="#c9a0a0" stroke-width="0.5" opacity="0.8"/><path d="M99.4 120.6 q2 0.8 3.4 0" stroke="#e08a8a" stroke-width="0.6" fill="none"/><path d="M102.6 119.2 L106.4 123.2" stroke="#f6a81c" stroke-width="2.1" stroke-linecap="round"/><path d="M102.4 118.6 L104.6 120.6" stroke="#fbd670" stroke-width="0.9" stroke-linecap="round"/><path d="M106.6 123.4 L107.6 124.6" stroke="#e0686a" stroke-width="2" stroke-linecap="round"/></svg>
<svg style="left:0;top:0" width="1500" height="844" viewBox="0 0 1500 844"><g stroke="#3a3a3a" stroke-width="0.9"><line x1="95.5" y1="148" x2="95.5" y2="155"/><line x1="145.5" y1="148" x2="145.5" y2="155"/><line x1="195.5" y1="148" x2="195.5" y2="155"/><line x1="245.5" y1="148" x2="245.5" y2="155"/><line x1="295.5" y1="148" x2="295.5" y2="155"/><line x1="345.5" y1="148" x2="345.5" y2="155"/><line x1="395.5" y1="148" x2="395.5" y2="155"/><line x1="445.5" y1="148" x2="445.5" y2="155"/><line x1="495.5" y1="148" x2="495.5" y2="155"/><line x1="545.5" y1="148" x2="545.5" y2="155"/><line x1="595.5" y1="148" x2="595.5" y2="155"/><line x1="645.5" y1="148" x2="645.5" y2="155"/><line x1="695.5" y1="148" x2="695.5" y2="155"/><line x1="745.5" y1="148" x2="745.5" y2="155"/><line x1="795.5" y1="148" x2="795.5" y2="155"/><line x1="845.5" y1="148" x2="845.5" y2="155"/><line x1="895.5" y1="148" x2="895.5" y2="155"/><line x1="945.5" y1="148" x2="945.5" y2="155"/><line x1="995.5" y1="148" x2="995.5" y2="155"/><line x1="1045.5" y1="148" x2="1045.5" y2="155"/><line x1="1095.5" y1="148" x2="1095.5" y2="155"/><line x1="88" y1="682.5" x2="95" y2="682.5"/><line x1="88" y1="632.5" x2="95" y2="632.5"/><line x1="88" y1="582.5" x2="95" y2="582.5"/><line x1="88" y1="532.5" x2="95" y2="532.5"/><line x1="88" y1="482.5" x2="95" y2="482.5"/><line x1="88" y1="432.5" x2="95" y2="432.5"/><line x1="88" y1="382.5" x2="95" y2="382.5"/><line x1="88" y1="332.5" x2="95" y2="332.5"/><line x1="88" y1="282.5" x2="95" y2="282.5"/><line x1="88" y1="232.5" x2="95" y2="232.5"/><line x1="88" y1="182.5" x2="95" y2="182.5"/></g><path d="M884.6 145.4 L895.4 145.4 L890 151 Z" fill="#000"/><path d="M85.4 420 L85.4 431.4 L91.2 425.7 Z" fill="#000"/></svg>
<svg style="left:0;top:0" width="1500" height="844" viewBox="0 0 1500 844"><defs><clipPath id="hrc"><rect x="95" y="132" width="1059" height="23"/></clipPath><clipPath id="vrc"><rect x="72" y="155" width="23" height="577.4"/></clipPath></defs><g clip-path="url(#hrc)" font-family="Liberation Sans, sans-serif" font-size="9.6" fill="#111" text-anchor="middle"><text x="95.3" y="141.2">-50</text><text x="145.3" y="141.2">-40</text><text x="195.3" y="141.2">-30</text><text x="245.3" y="141.2">-20</text><text x="295.3" y="141.2">-10</text><text x="345.3" y="141.2">0</text><text x="395.3" y="141.2">10</text><text x="445.3" y="141.2">20</text><text x="495.3" y="141.2">30</text><text x="545.3" y="141.2">40</text><text x="595.3" y="141.2">50</text><text x="645.3" y="141.2">60</text><text x="695.3" y="141.2">70</text><text x="745.3" y="141.2">80</text><text x="795.3" y="141.2">90</text><text x="845.3" y="141.2">100</text><text x="895.3" y="141.2">110</text><text x="945.3" y="141.2">120</text><text x="995.3" y="141.2">130</text><text x="1045.3" y="141.2">140</text><text x="1095.3" y="141.2">150</text></g><g clip-path="url(#vrc)" font-family="Liberation Sans, sans-serif" font-size="9.6" fill="#111" text-anchor="middle"><text transform="translate(81.6 732.3) rotate(-90)">-30</text><text transform="translate(81.6 682.3) rotate(-90)">-20</text><text transform="translate(81.6 632.3) rotate(-90)">-10</text><text transform="translate(81.6 582.3) rotate(-90)">0</text><text transform="translate(81.6 532.3) rotate(-90)">10</text><text transform="translate(81.6 482.3) rotate(-90)">20</text><text transform="translate(81.6 432.3) rotate(-90)">30</text><text transform="translate(81.6 382.3) rotate(-90)">40</text><text transform="translate(81.6 332.3) rotate(-90)">50</text><text transform="translate(81.6 282.3) rotate(-90)">60</text><text transform="translate(81.6 232.3) rotate(-90)">70</text><text transform="translate(81.6 182.3) rotate(-90)">80</text></g></svg>
<svg style="left:95px;top:155px" width="1043" height="577" viewBox="95 155 1043 577"><defs><pattern id="grid" x="95" y="132" width="50" height="50" patternUnits="userSpaceOnUse"><rect x="0" y="0" width="1" height="1" fill="#3e3e3e"/></pattern><clipPath id="cvclip"><rect x="95" y="155" width="1043" height="577"/></clipPath><radialGradient id="gRing" cx="0.5" cy="0.5" r="0.5"><stop offset="0.76" stop-color="#000" stop-opacity="0"/><stop offset="0.86" stop-color="#3c4c5c"/><stop offset="0.93" stop-color="#5a6e82"/><stop offset="0.985" stop-color="#55687c"/><stop offset="1" stop-color="#3a4654" stop-opacity="0"/></radialGradient></defs><g clip-path="url(#cvclip)"><rect x="95" y="155" width="1043" height="577" fill="#000"/><g fill="#101010"><rect x="844" y="155" width="2" height="577"/><rect x="344" y="155" width="2" height="577"/><rect x="95" y="581" width="1043" height="2"/></g><rect x="95" y="155" width="1043" height="577" fill="url(#grid)"/><g fill="#4e0a0a"><rect x="344" y="583" width="2" height="13.4"/><rect x="324.6" y="581" width="19.4" height="2"/></g><g fill="#ae0000"><rect x="344" y="350" width="2" height="233"/><rect x="344" y="581" width="233" height="2"/></g><circle cx="345" cy="582" r="4.9" fill="none" stroke="#a00000" stroke-width="1.1"/><rect x="344" y="331.2" width="2" height="5" fill="#9a0000"/><rect x="591" y="581" width="5.2" height="2" fill="#9a0000"/><path d="M345 333.4 L350.2 352.1 L339.8 352.1 Z" fill="#ff0000"/><path d="M593.8 582 L575 587.2 L575 576.8 Z" fill="#ff0000"/><defs><linearGradient id="gLbl" x1="0" y1="0" x2="1" y2="1"><stop offset="0" stop-color="#f6f8fb"/><stop offset="1" stop-color="#dbe0e9"/></linearGradient></defs><rect x="334.6" y="443.5" width="19" height="25.2" rx="2.6" fill="url(#gLbl)" stroke="#c4cad4" stroke-width="0.5"/><rect x="459.7" y="568.5" width="18.8" height="25" rx="2.6" fill="url(#gLbl)" stroke="#c4cad4" stroke-width="0.5"/><text x="344.5" y="461.8" text-anchor="middle" font-family="Liberation Sans, sans-serif" font-size="15.2" fill="#0a0a0a">Y</text><text x="469.6" y="586.8" text-anchor="middle" font-family="Liberation Sans, sans-serif" font-size="15.2" fill="#0a0a0a">X</text><circle cx="890.2" cy="425" r="39.8" fill="url(#gRing)"/><path d="M889.8 424.6 L889.8 448 L895 443 L899.5 453.2 L903.9 451.2 L899.4 441.4 L906.4 441.4 Z" fill="#fff" stroke="#fff" stroke-width="3" stroke-linejoin="round" opacity="0.9"/><path d="M889.8 424.6 L889.8 448 L895 443 L899.5 453.2 L903.9 451.2 L899.4 441.4 L906.4 441.4 Z" fill="#fff" stroke="#0c0c0c" stroke-width="1.7" stroke-linejoin="round"/></g></svg>
<div style="left:1143px;top:158px;width:8px;height:411px;border-radius:4px;background:#7e7e7e"></div>
<div style="left:1083px;top:732px;width:71px;height:16px;background:#ececec"></div>
<span id="t_zoomlbl" style="left:1102.77px;top:731.00px;font-size:13px;line-height:20px;height:20px;letter-spacing:-0.019px;color:#111;font-style:normal;font-weight:normal;font-family:'Liberation Sans',sans-serif;white-space:pre;-webkit-text-stroke:0.15px #111;">10 &lt; 100</span>
<div style="left:72px;top:748px;width:1082px;height:2px;background:#b4b4b4"></div>
<div style="left:73px;top:750px;width:1081px;height:20px;background:#fff"></div>
<div style="left:73px;top:770px;width:1081px;height:1px;background:#bfbfbf"></div>
<div style="left:72px;top:771px;width:1082px;height:27px;background:#ececec"></div>
<div style="left:138px;top:776px;width:989px;height:18px;background:#fff"></div>
<div style="left:72px;top:796.6px;width:1082px;height:1.4px;background:#d6d6d6"></div>
<span id="t_cmdhist" style="left:76.83px;top:748.00px;font-size:13.4px;line-height:20px;height:20px;letter-spacing:-0.091px;color:#0000e6;font-style:normal;font-weight:normal;font-family:'Liberation Sans',sans-serif;white-space:pre;-webkit-text-stroke:0.15px #0000e6;"><i>Comando:</i> new</span>
<span id="t_cmdlbl" style="left:72.33px;top:776.00px;font-size:13.4px;line-height:20px;height:20px;letter-spacing:0.200px;color:#0a0a0a;font-style:normal;font-weight:normal;font-family:'Liberation Sans',sans-serif;white-space:pre;-webkit-text-stroke:0.15px #0a0a0a;">Comando:</span>
<div style="left:1127px;top:772px;width:26px;height:25.4px;background:linear-gradient(#e9e9e9,#f5f5f5);border:1px solid #a8a8a8;box-sizing:border-box"></div>
<svg style="left:1127px;top:772px" width="26" height="26" viewBox="0 0 26 26"><rect x="6.5" y="8.4" width="13.4" height="9" fill="#f4f4f4" stroke="#1a1a1a" stroke-width="0.8"/><rect x="6.1" y="8" width="14.2" height="2.6" fill="#111"/></svg>
<div style="left:1154px;top:108px;width:2px;height:690px;background:linear-gradient(90deg,#cfcfcf 0px,#b6b6b6 0.6px,#b0b0b0 1.4px,#d4d4d4 2px)"></div>
<div style="left:1156px;top:108px;width:298px;height:23px;background:linear-gradient(#efefef,#e6e6e6 50%,#d8d8d8)"></div><div style="left:1156px;top:130px;width:298px;height:27px;background:#b9b9b9"></div><div style="left:1156px;top:131px;width:58.2px;height:24.2px;background:linear-gradient(#e8e8e8,#f1f1f1 40%,#f7f7f7)"></div><div style="left:1216px;top:131px;width:58.2px;height:24.2px;background:linear-gradient(#e8e8e8,#f1f1f1 40%,#f7f7f7)"></div><div style="left:1276px;top:131px;width:58.2px;height:24.2px;background:linear-gradient(#e8e8e8,#f1f1f1 40%,#f7f7f7)"></div><div style="left:1336px;top:131px;width:58.2px;height:24.2px;background:linear-gradient(#e8e8e8,#f1f1f1 40%,#f7f7f7)"></div><div style="left:1396px;top:131px;width:58px;height:24.2px;background:linear-gradient(#e8e8e8,#f1f1f1 40%,#f7f7f7)"></div><div style="left:1156px;top:157px;width:298px;height:641px;background:#fff"></div><span id="t_laytitle" style="left:1279.77px;top:109.00px;font-size:11.2px;line-height:20px;height:20px;letter-spacing:0.347px;color:#262626;font-style:normal;font-weight:normal;font-family:'Liberation Sans',sans-serif;white-space:pre;-webkit-text-stroke:0.1px #262626;">Elenco dei livelli</span><span id="t_lay0" style="left:1182.70px;top:157.00px;font-size:13.9px;line-height:20px;height:20px;letter-spacing:0.000px;color:#111;font-style:normal;font-weight:normal;font-family:'Liberation Sans',sans-serif;white-space:pre;">0</span>
<svg style="left:0;top:0" width="1500" height="844" viewBox="0 0 1500 844"><circle cx="1164" cy="118" r="6.9" fill="#6e6e6e"/><path d="M1161.3 115.3 L1166.7 120.7 M1166.7 115.3 L1161.3 120.7" stroke="#fff" stroke-width="1.5" stroke-linecap="round"/><circle cx="1182" cy="118" r="6.9" fill="#6e6e6e"/><rect x="1180.4" y="115.4" width="5" height="3.8" rx="0.5" fill="none" stroke="#fff" stroke-width="0.8"/><rect x="1178.5" y="117.3" width="5" height="3.8" rx="0.5" fill="#6e6e6e" stroke="#fff" stroke-width="0.8"/><g transform="translate(1184.9 142.6) scale(1)"><path d="M-7.7 0.3 C-7 -1.6 -6.2 -3.4 -4.2 -4.6 C-2.8 -5.4 -1.4 -5.7 0.2 -5.7 C2.6 -5.7 4.6 -4.8 5.8 -3.4 C6.8 -2.2 7.4 -1 7.7 0.4 C6.8 2 6 3.4 4.4 4.5 C3 5.3 1.6 5.6 0 5.6 C-2 5.6 -3.8 4.8 -5.2 3.6 C-6.2 2.6 -7 1.6 -7.7 0.3 Z" fill="#000"/><path d="M-4.4 -1.7 C-4.5 1.6 -2.4 3.2 0 3.2 C2.4 3.2 4.5 1.6 4.4 -1.7" fill="none" stroke="#fff" stroke-width="1.5" stroke-linecap="round"/><circle cx="-1.2" cy="-1.2" r="0.8" fill="#9a9a9a"/></g><g opacity="0.4"><g transform="translate(1244.9 142.6) scale(1)"><path d="M-7.7 0.3 C-7 -1.6 -6.2 -3.4 -4.2 -4.6 C-2.8 -5.4 -1.4 -5.7 0.2 -5.7 C2.6 -5.7 4.6 -4.8 5.8 -3.4 C6.8 -2.2 7.4 -1 7.7 0.4 C6.8 2 6 3.4 4.4 4.5 C3 5.3 1.6 5.6 0 5.6 C-2 5.6 -3.8 4.8 -5.2 3.6 C-6.2 2.6 -7 1.6 -7.7 0.3 Z" fill="#222"/><path d="M-4.4 -1.7 C-4.5 1.6 -2.4 3.2 0 3.2 C2.4 3.2 4.5 1.6 4.4 -1.7" fill="none" stroke="#fff" stroke-width="1.5" stroke-linecap="round"/><circle cx="-1.2" cy="-1.2" r="0.8" fill="#9a9a9a"/></g></g><path d="M1303 137.6 h3 v3.9 h3.9 v3 h-3.9 v3.9 h-3 v-3.9 h-3.9 v-3 h3.9 Z" fill="#f00" stroke="#7a1a1a" stroke-width="0.5"/><rect x="1359.2" y="141.5" width="11.6" height="3" fill="#f00" stroke="#7a3a3a" stroke-width="0.5"/><g transform="translate(1418.2 149.6) rotate(-44)"><path d="M0 0 L3.2 -1.7 L3.2 1.7 Z" fill="#e8cf9a" stroke="#8a6a2a" stroke-width="0.4"/><path d="M0 0 L1.2 -0.7 L1.2 0.7 Z" fill="#5a4a30"/><rect x="3.2" y="-1.7" width="12.9" height="3.4" fill="#dba23a" stroke="#a8741c" stroke-width="0.4"/><rect x="3.2" y="-0.6" width="12.9" height="1" fill="#f0c060"/><rect x="16.1" y="-1.8" width="3.4" height="3.6" rx="0.7" fill="#ee2222"/></g><rect x="1161.4" y="163.4" width="15.4" height="8" fill="#fff" stroke="#000" stroke-width="0.9"/><g transform="translate(1394.6 173.4) rotate(-44)"><path d="M0 0 L3.2 -1.7 L3.2 1.7 Z" fill="#e8cf9a" stroke="#8a6a2a" stroke-width="0.4"/><path d="M0 0 L1.2 -0.7 L1.2 0.7 Z" fill="#5a4a30"/><rect x="3.2" y="-1.7" width="12.4" height="3.4" fill="#dba23a" stroke="#a8741c" stroke-width="0.4"/><rect x="3.2" y="-0.6" width="12.4" height="1" fill="#f0c060"/><rect x="15.6" y="-1.8" width="3.4" height="3.6" rx="0.7" fill="#ee2222"/></g><g transform="translate(1422.8 166.6) scale(1)"><path d="M-7.7 0.3 C-7 -1.6 -6.2 -3.4 -4.2 -4.6 C-2.8 -5.4 -1.4 -5.7 0.2 -5.7 C2.6 -5.7 4.6 -4.8 5.8 -3.4 C6.8 -2.2 7.4 -1 7.7 0.4 C6.8 2 6 3.4 4.4 4.5 C3 5.3 1.6 5.6 0 5.6 C-2 5.6 -3.8 4.8 -5.2 3.6 C-6.2 2.6 -7 1.6 -7.7 0.3 Z" fill="#000"/><path d="M-4.4 -1.7 C-4.5 1.6 -2.4 3.2 0 3.2 C2.4 3.2 4.5 1.6 4.4 -1.7" fill="none" stroke="#fff" stroke-width="1.5" stroke-linecap="round"/><circle cx="-1.2" cy="-1.2" r="0.8" fill="#9a9a9a"/></g><path d="M1441.4 167 v-2.4 a3.5 3.5 0 0 1 7 0 v2.4" fill="none" stroke="#c0c0c0" stroke-width="1.3"/><rect x="1440.2" y="166.8" width="9.6" height="6.8" fill="#b4b4b4"/></svg>
<div class="lbtn" style="left:1.2px;top:121.6px;width:70px"></div><div class="lsep" style="left:35.3px;top:122.6px"></div><div class="lbtn" style="left:1.2px;top:156.6px;width:70px"></div><div class="lsep" style="left:35.3px;top:157.6px"></div><div class="lbtn" style="left:1.2px;top:191.6px;width:70px"></div><div class="lsep" style="left:35.3px;top:192.6px"></div><div class="lbtn" style="left:1.2px;top:226.6px;width:70px"></div><div class="lsep" style="left:35.3px;top:227.6px"></div><div class="lbtn" style="left:1.2px;top:304.6px;width:70px"></div><div class="lsep" style="left:35.3px;top:305.6px"></div><div class="lbtn" style="left:1.2px;top:382.6px;width:70px"></div><div class="lsep" style="left:35.3px;top:383.6px"></div><div class="lbtn" style="left:1.2px;top:417.6px;width:70px"></div><div class="lsep" style="left:35.3px;top:418.6px"></div><div class="lbtn" style="left:1.2px;top:261.6px;width:35.2px"></div><div class="lbtn" style="left:1.2px;top:339.6px;width:35.2px"></div><div class="lbtn" style="left:1.2px;top:460.6px;width:35.2px"></div>
<svg style="left:0;top:0" width="100" height="844" viewBox="0 0 100 844"><rect x="7" y="116" width="2" height="2" fill="#a3a3a3"/><rect x="13" y="116" width="2" height="2" fill="#a3a3a3"/><rect x="19" y="116" width="2" height="2" fill="#a3a3a3"/><rect x="25" y="116" width="2" height="2" fill="#a3a3a3"/><rect x="31" y="116" width="2" height="2" fill="#a3a3a3"/><rect x="37" y="116" width="2" height="2" fill="#a3a3a3"/><rect x="43" y="116" width="2" height="2" fill="#a3a3a3"/><rect x="49" y="116" width="2" height="2" fill="#a3a3a3"/><rect x="55" y="116" width="2" height="2" fill="#a3a3a3"/><rect x="61" y="116" width="2" height="2" fill="#a3a3a3"/><g stroke="#000" stroke-width="0.9" fill="none"><path d="M8.2 131.5 h6.6 M11.5 128.2 v6.6"/><path d="M22.2 140.5 h6.6 M25.5 137.2 v6.6"/><path d="M9.1 146.5 h6.6 M12.4 143.2 v6.6"/></g><path d="M31.2 147.4 L31.2 152.1 L26.5 152.1 Z" fill="#000"/><line x1="41.6" y1="144.6" x2="65" y2="134" stroke="#111" stroke-width="0.95"/><path d="M66.2 147.4 L66.2 152.1 L61.5 152.1 Z" fill="#000"/><path d="M7.6 183.4 Q9.6 166.6 27.4 163.6" fill="none" stroke="#2a2a2a" stroke-width="1"/><path d="M31.2 182.4 L31.2 187.1 L26.5 187.1 Z" fill="#000"/><circle cx="52.5" cy="173.5" r="10" fill="none" stroke="#2a2a2a" stroke-width="0.95"/><path d="M66.2 182.4 L66.2 187.1 L61.5 187.1 Z" fill="#000"/><ellipse cx="18" cy="209" rx="13.4" ry="6.1" transform="rotate(-42 18 209)" fill="none" stroke="#2a2a2a" stroke-width="0.95"/><path d="M31.2 217.4 L31.2 222.1 L26.5 222.1 Z" fill="#000"/><path d="M42.4 200.6 C44.4 198.6 50.4 203 55 207 C59 210.4 63.4 212.4 64.4 210.8 C65.4 208.4 63 199.6 60 199.4 C57 199.2 56 204 54 208.6 C52 213.4 50 218.8 48 218.4 C45.4 217.8 40.6 203.4 42.4 200.6 Z" fill="none" stroke="#2a2a2a" stroke-width="0.95"/><path d="M66.2 217.4 L66.2 222.1 L61.5 222.1 Z" fill="#000"/><path d="M13.6 239.2 C10.4 239.4 8.2 241.4 8.2 243.8 C8.2 246.2 10.6 248 13.4 248 L27.6 248" fill="none" stroke="#2a2a2a" stroke-width="1"/><path d="M31.2 252.4 L31.2 257.1 L26.5 257.1 Z" fill="#000"/><path d="M40.4 238.3 L43.9 232.2 L51.1 232.2 L54.6 238.3 L51.1 244.4 L43.9 244.4 Z" fill="none" stroke="#2a2a2a" stroke-width="0.95"/><path d="M55.6 245.3 L65.8 245.3 L60.7 236.6 Z" fill="none" stroke="#2a2a2a" stroke-width="0.95"/><rect x="41.3" y="248.7" width="14" height="6.9" rx="0.6" fill="none" stroke="#2a2a2a" stroke-width="0.95"/><path d="M66.2 252.4 L66.2 257.1 L61.5 257.1 Z" fill="#000"/><defs><pattern id="hatch" width="2" height="2" patternUnits="userSpaceOnUse" patternTransform="rotate(45)"><rect width="2" height="2" fill="#f0f0f0"/><line x1="0.5" y1="0" x2="0.5" y2="2" stroke="#555" stroke-width="0.7"/></pattern></defs><path d="M7.5 286.4 L7.5 279.2 L13.6 272.4 L28.6 272.4 L28.6 286.4 Z" fill="url(#hatch)" stroke="#2a2a2a" stroke-width="1"/><circle cx="20.6" cy="280" r="3" fill="#f2f2f2" stroke="#2a2a2a" stroke-width="0.9"/><path d="M31.2 287.4 L31.2 292.1 L26.5 292.1 Z" fill="#000"/><text x="18" y="331.8" text-anchor="middle" font-family="Liberation Serif, serif" font-size="29.4" fill="#111">A</text><g stroke="#2a2a2a" stroke-width="1" fill="none"><path d="M43.5 314.4 V329.8 M61.6 314.4 V329.8 M44 316.3 H61"/></g><path d="M44 316.3 L47.4 314.5 L47.4 318.1 Z M61.1 316.3 L57.7 314.5 L57.7 318.1 Z" fill="#111"/><path d="M66.2 330.4 L66.2 335.1 L61.5 335.1 Z" fill="#000"/><rect x="6.9" y="348.5" width="22" height="17" fill="#fff" stroke="#333" stroke-width="1.3"/><path d="M10 362.4 L10 359.6 L13 356.2 L15.6 358.2 L20 353.8 L26 359.8 L26 362.4 Z" fill="#000" stroke="#000" stroke-width="0.6" stroke-linejoin="round"/><circle cx="24.5" cy="352.5" r="1.7" fill="#000"/><path d="M5.4 393.6 L5.4 412.5 L24.4 412.5 Z" fill="#fff" stroke="#111" stroke-width="1.1" stroke-linejoin="miter"/><path d="M9.6 402.4 L9.6 408.4 L15.4 408.4 Z" fill="#eee" stroke="#111" stroke-width="0.9"/><g transform="translate(20.6 398.8) rotate(-135)"><path d="M0 0 L3 -1.7 L3 1.7 Z" fill="#e8c090" stroke="#8a5a2a" stroke-width="0.4"/><path d="M0 0 L1.1 -0.6 L1.1 0.6 Z" fill="#222"/><rect x="3" y="-1.8" width="9.2" height="3.6" fill="#d81c1c" stroke="#8a2a1a" stroke-width="0.4"/><rect x="3" y="-0.8" width="9.2" height="1" fill="#f05a4a"/><rect x="12.2" y="-1.8" width="1.2" height="3.6" fill="#ddd"/><path d="M13.4 -1.8 h1 q1.4 0 1.4 1.4 v0.8 q0 1.4 -1.4 1.4 h-1 Z" fill="#ee2a2a"/></g><g stroke="#111" stroke-width="0.9" fill="none"><path d="M26.2 389.4 L23.6 405.6 M26.4 389.4 L29.2 405.6"/><path d="M26.3 387 V390.2" stroke-width="1.1"/><circle cx="26.3" cy="390.6" r="1.1" fill="#888"/></g><path d="M31.2 408.4 L31.2 413.1 L26.5 413.1 Z" fill="#000"/><rect x="41.6" y="396.2" width="23.2" height="7.4" rx="0.8" fill="#fdfdfd" stroke="#8a8a8a" stroke-width="0.9"/><g stroke="#444" stroke-width="0.6"><line x1="43.4" y1="396.4" x2="43.4" y2="399.4"/><line x1="45.35" y1="396.4" x2="45.35" y2="398"/><line x1="47.3" y1="396.4" x2="47.3" y2="398"/><line x1="49.25" y1="396.4" x2="49.25" y2="398"/><line x1="51.2" y1="396.4" x2="51.2" y2="398"/><line x1="53.15" y1="396.4" x2="53.15" y2="399.4"/><line x1="55.1" y1="396.4" x2="55.1" y2="398"/><line x1="57.05" y1="396.4" x2="57.05" y2="398"/><line x1="59" y1="396.4" x2="59" y2="398"/><line x1="60.95" y1="396.4" x2="60.95" y2="398"/><line x1="62.9" y1="396.4" x2="62.9" y2="399.4"/></g><rect x="7.6" y="425.6" width="16.8" height="12.4" fill="#f2eedc" stroke="#9a9a96" stroke-width="1.1"/><circle cx="21.9" cy="437" r="7" fill="#f2eedc" fill-opacity="0.85" stroke="#9a9a96" stroke-width="1.1"/><path d="M7.6 438 H24.4 V430" fill="none" stroke="#a4a4a0" stroke-width="1.1"/><circle cx="7.8" cy="438" r="1.5" fill="#ff9a9a"/><line x1="41.6" y1="433.8" x2="59.2" y2="423.8" stroke="#ff3030" stroke-width="1"/><path d="M51.4 429.6 L51.4 440.6 L54 438.4 L56.4 443.4 L58.4 442.4 L56.2 437.6 L59.4 437.4 Z" fill="#fff" stroke="#8c8c8c" stroke-width="0.9" stroke-linejoin="round"/><path d="M66.2 443.4 L66.2 448.1 L61.5 448.1 Z" fill="#000"/><g fill="none" stroke="#2a2a2a" stroke-width="1" stroke-linejoin="round"><path d="M7.6 475 L19.8 467.2 L28.4 472 L16 479.2 Z"/><path d="M7.6 475 V483.6 L16 488.4 L28.4 481 V472"/><path d="M16 479.2 V488.4"/></g><path d="M31.2 486.4 L31.2 491.1 L26.5 491.1 Z" fill="#000"/></svg>
<svg style="left:0;top:0" width="1500" height="844" viewBox="0 0 1500 844"><rect x="1462" y="116" width="2" height="2" fill="#a3a3a3"/><rect x="1468" y="116" width="2" height="2" fill="#a3a3a3"/><rect x="1474" y="116" width="2" height="2" fill="#a3a3a3"/><rect x="1480" y="116" width="2" height="2" fill="#a3a3a3"/><rect x="1486" y="116" width="2" height="2" fill="#a3a3a3"/><rect x="1456.2" y="119.8" width="43.4" height="43.2" rx="4.8" fill="#b5b5b5"/><rect x="1456.2" y="417" width="43.4" height="43.2" rx="4.8" fill="#b5b5b5"/><line x1="1458" y1="261.5" x2="1500" y2="261.5" stroke="#555" stroke-width="1" stroke-dasharray="1 2.02"/><line x1="1458" y1="409.4" x2="1500" y2="409.4" stroke="#555" stroke-width="1" stroke-dasharray="1 2.02"/><rect x="1463.5" y="127.4" width="27" height="27" fill="#fff" stroke="#484848" stroke-width="0.85"/><rect x="1463.1" y="127" width="27.8" height="4.8" fill="#000"/><rect x="1464.1" y="128" width="3.2" height="3" fill="#fff"/><rect x="1463.5" y="174.5" width="27" height="27" fill="#fff" stroke="#484848" stroke-width="0.85"/><rect x="1463.1" y="174.1" width="27.8" height="4.8" fill="#000"/><rect x="1464.1" y="175.1" width="3.2" height="3" fill="#fff"/><rect x="1463.5" y="220.5" width="27" height="27" fill="#fff" stroke="#484848" stroke-width="0.85"/><rect x="1463.1" y="220.1" width="27.8" height="4.8" fill="#000"/><rect x="1464.1" y="221.1" width="3.2" height="3" fill="#fff"/><rect x="1463.5" y="276.4" width="27" height="27" fill="#fff" stroke="#484848" stroke-width="0.85"/><rect x="1463.1" y="276" width="27.8" height="4.8" fill="#000"/><rect x="1464.1" y="277" width="3.2" height="3" fill="#fff"/><rect x="1463.5" y="322.5" width="27" height="27" fill="#fff" stroke="#484848" stroke-width="0.85"/><rect x="1463.1" y="322.1" width="27.8" height="4.8" fill="#000"/><rect x="1464.1" y="323.1" width="3.2" height="3" fill="#fff"/><rect x="1463.5" y="368.4" width="27" height="27" fill="#fff" stroke="#484848" stroke-width="0.85"/><rect x="1463.1" y="368" width="27.8" height="4.8" fill="#000"/><rect x="1464.1" y="369" width="3.2" height="3" fill="#fff"/><rect x="1463.5" y="424.6" width="27" height="27" fill="#fff" stroke="#484848" stroke-width="0.85"/><rect x="1463.1" y="424.2" width="27.8" height="4.8" fill="#000"/><rect x="1464.1" y="425.2" width="3.2" height="3" fill="#fff"/><rect x="1463.5" y="471.5" width="27" height="27" fill="#fff" stroke="#484848" stroke-width="0.85"/><rect x="1463.1" y="471.1" width="27.8" height="4.8" fill="#000"/><rect x="1464.1" y="472.1" width="3.2" height="3" fill="#fff"/><g transform="translate(0 127)"><path d="M1470.4 13.6 L1479.6 9 L1479.6 18 L1470.4 22.6 Z" fill="#9a9a9a" stroke="#555" stroke-width="0.6"/><path d="M1472.6 13.2 L1481.6 8.8 L1481.6 17.8 L1472.6 22.2 Z" fill="#b8b8b8" stroke="#666" stroke-width="0.5"/><path d="M1474.4 14.2 L1483.6 9.4 L1483.6 18.4 L1474.4 23.2 Z" fill="#fff" stroke="#666" stroke-width="0.6"/><path d="M1476.4 20.4 L1481.4 12 L1481.6 17.6 M1478.2 17.6 L1481.4 16" stroke="#ff4a4a" stroke-width="0.8" fill="none"/></g><g transform="translate(0 174.1)"><rect x="1470.2" y="10" width="10" height="7.4" fill="#fbf2cf" stroke="#7a7a70" stroke-width="0.7"/><circle cx="1479" cy="17" r="4.3" fill="#fbf2cf" fill-opacity="0.9" stroke="#7a7a70" stroke-width="0.7"/><path d="M1474.6 17.4 H1480.2 V12.8" fill="none" stroke="#8a8a80" stroke-width="0.6"/></g><g transform="translate(0 220.1)"><rect x="1468.6" y="10.2" width="16.6" height="11" rx="1.8" fill="#f6f6f4" stroke="#c4d2ea" stroke-width="0.8"/></g><g transform="translate(0 276)"><rect x="1466.3" y="8.3" width="4.5" height="3.4" rx="0.8" fill="#000"/><rect x="1473.4" y="8.5" width="14.2" height="3" rx="0.5" fill="#fff" stroke="#444" stroke-width="0.7"/><rect x="1466.3" y="14.2" width="4.5" height="3.4" rx="0.8" fill="#000"/><rect x="1473.4" y="14.4" width="14.2" height="3" rx="0.5" fill="#fff" stroke="#444" stroke-width="0.7"/><rect x="1466.3" y="20.1" width="4.5" height="3.4" rx="0.8" fill="#000"/><rect x="1473.4" y="20.3" width="14.2" height="3" rx="0.5" fill="#fff" stroke="#444" stroke-width="0.7"/></g><g transform="translate(0 322.1)"><path d="M1470.4 10.2 L1483.6 10.2 L1478.8 16.2 L1478.8 22.4 L1476.4 21.4 L1475.2 16.2 Z" fill="#bdbdbd" stroke="#6a6a6a" stroke-width="0.6" stroke-linejoin="round"/><ellipse cx="1477" cy="10.2" rx="6.8" ry="1.4" fill="#7a7a7a" stroke="#555" stroke-width="0.5"/><path d="M1476.6 16.4 L1478.2 16.4 L1478.2 21.6 L1477 21" fill="#e4e4e4"/></g><g transform="translate(0 368)"><path d="M1469.4 9.4 L1473.6 12.6 L1473.6 19.4 L1469.4 22.6 Z" fill="#e4e4e4" stroke="#333" stroke-width="0.7" stroke-linejoin="round"/><rect x="1473.6" y="12.4" width="4" height="7.2" fill="#fff" stroke="#555" stroke-width="0.5"/><path d="M1477.2 12.2 H1483.6 Q1484.8 12.2 1484.8 13.4 V18.6 Q1484.8 19.8 1483.6 19.8 H1477.2 Z" fill="#8c8c8c" stroke="#555" stroke-width="0.5"/><line x1="1467" y1="16" x2="1487" y2="16" stroke="#ff9a9a" stroke-width="0.9" stroke-dasharray="2.4 1" opacity="0.8"/></g><g transform="translate(0 424.2)"><rect x="1465.4" y="8.6" width="14" height="0.9" fill="#777" opacity="0.55"/><rect x="1465.4" y="11.9" width="13.4" height="0.9" fill="#777" opacity="0.55"/><rect x="1465.4" y="15.1" width="16" height="0.9" fill="#777" opacity="0.55"/><rect x="1465.4" y="18.4" width="17" height="0.9" fill="#777" opacity="0.55"/><rect x="1463.2" y="21.6" width="27.6" height="1" fill="#222"/><rect x="1472.2" y="24.4" width="15.4" height="1" fill="#555" opacity="0.8"/><rect x="1465.4" y="24.4" width="2" height="1" fill="#555" opacity="0.7"/></g><g transform="translate(0 471.1)"><rect x="1471" y="9.6" width="11.8" height="12.8" rx="0.8" fill="#c88a2a" stroke="#b87a1a" stroke-width="0.5"/><rect x="1472.4" y="11" width="9" height="10.2" fill="#f4f4f4"/><path d="M1478.8 21.2 L1481.4 21.2 L1481.4 18.6 Z" fill="#8a8a8a"/><rect x="1474.4" y="8.6" width="5.2" height="2.8" rx="0.6" fill="#9a9a8e"/><rect x="1473.8" y="13" width="6" height="0.6" fill="#c4c4c4"/><rect x="1473.8" y="14.6" width="6" height="0.6" fill="#c4c4c4"/><rect x="1473.8" y="16.2" width="5" height="0.6" fill="#c4c4c4"/><rect x="1473.8" y="17.8" width="4" height="0.6" fill="#c4c4c4"/></g></svg>
<span id="t_st1" style="left:1.53px;top:803.00px;font-size:9.6px;line-height:20px;height:20px;letter-spacing:0.205px;color:#161616;font-style:normal;font-weight:normal;font-family:'Liberation Sans',sans-serif;white-space:pre;">109,31.4</span><span id="t_st2" style="left:1.53px;top:823.00px;font-size:9.6px;line-height:20px;height:20px;letter-spacing:0.046px;color:#161616;font-style:normal;font-weight:normal;font-family:'Liberation Sans',sans-serif;white-space:pre;">@109,31.4</span><span id="t_st3" style="left:255.53px;top:803.00px;font-size:9.6px;line-height:20px;height:20px;letter-spacing:0.324px;color:#161616;font-style:normal;font-weight:normal;font-family:'Liberation Sans',sans-serif;white-space:pre;">113.4326&lt;16°</span><span id="t_st4" style="left:255.37px;top:823.00px;font-size:9.6px;line-height:20px;height:20px;letter-spacing:0.233px;color:#161616;font-style:normal;font-weight:normal;font-family:'Liberation Sans',sans-serif;white-space:pre;">@113.4326&lt;16°</span><span id="t_st5" style="left:571.40px;top:813.00px;font-size:9.5px;line-height:20px;height:20px;letter-spacing:0.333px;color:#161616;font-style:normal;font-weight:normal;font-family:'Liberation Sans',sans-serif;white-space:pre;-webkit-text-stroke:0.12px #161616;">Selezionare entità o regione</span><span id="t_st6" style="left:948.53px;top:813.00px;font-size:9.5px;line-height:20px;height:20px;letter-spacing:0.380px;color:#161616;font-style:normal;font-weight:normal;font-family:'Liberation Sans',sans-serif;white-space:pre;-webkit-text-stroke:0.12px #161616;">Nessun entità selezionate.</span><div style="left:253px;top:803.6px;width:1px;height:39px;background:#9c9c9c"></div><div style="left:254px;top:803.6px;width:1px;height:39px;background:#f4f4f4"></div><div style="left:506.4px;top:819px;width:5.6px;height:5.6px;border-radius:3px;background:#cacaca"></div><div style="left:940.2px;top:819px;width:5.6px;height:5.6px;border-radius:3px;background:#cacaca"></div><div style="left:1269.5px;top:819px;width:5.6px;height:5.6px;border-radius:3px;background:#cacaca"></div>
<svg style="left:712px;top:802px" width="30" height="38" viewBox="712 802 30 38"><rect x="717.4" y="806.6" width="17.2" height="28.4" rx="8.4" fill="#fff" stroke="#2a2a2a" stroke-width="0.8"/><path d="M717.6 820.4 Q726 816.6 734.4 820.4" fill="none" stroke="#2a2a2a" stroke-width="0.7"/><line x1="726" y1="806.6" x2="726" y2="818.6" stroke="#2a2a2a" stroke-width="0.6"/><rect x="724.6" y="809" width="2.8" height="6.2" rx="1.2" fill="#fff" stroke="#2a2a2a" stroke-width="0.7"/></svg>
</div>
</body></html>
